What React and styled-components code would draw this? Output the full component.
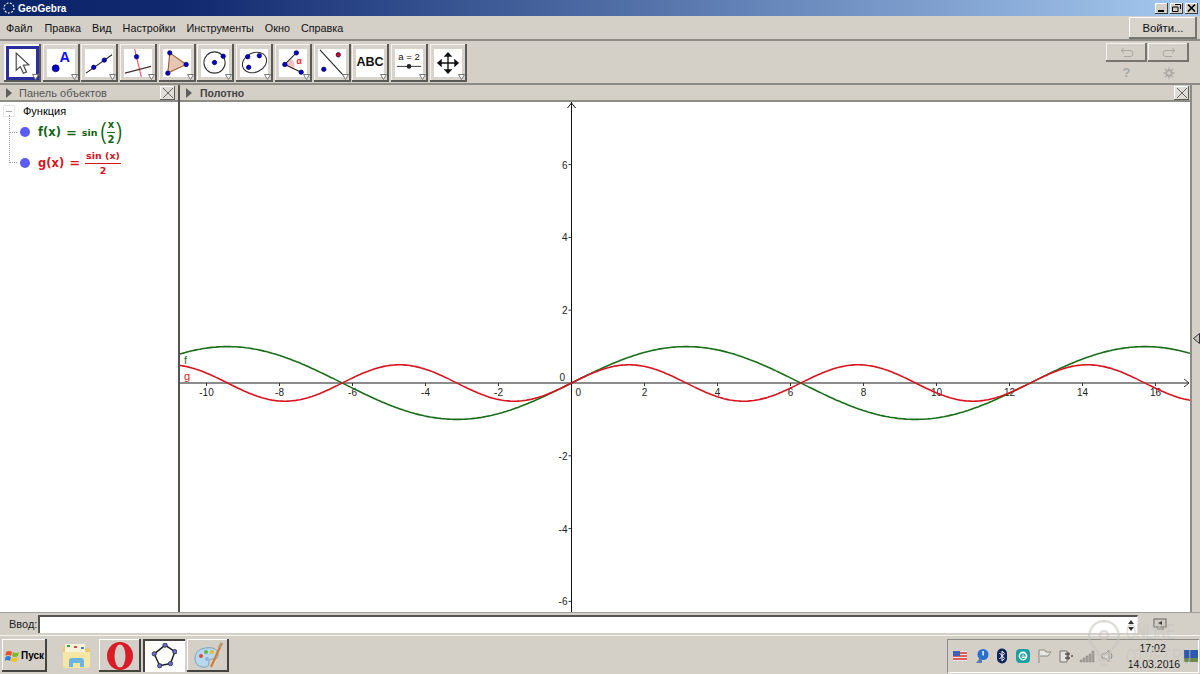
import styled, { createGlobalStyle } from "styled-components";

const GlobalStyle = createGlobalStyle`
  html, body { margin: 0; padding: 0; background: #d4d0c8; overflow: hidden; }
  body { font-family: "Liberation Sans", Arial, sans-serif; }
`;

const Screen = styled.div`
  width: 1200px;
  height: 674px;
  display: flex;
  flex-direction: column;
  position: relative;
  overflow: hidden;
  background: #d4d0c8;
`;

const TitleBar = styled.div`
  height: 16px;
  flex: none;
  display: flex;
  align-items: center;
  padding: 0 2px 0 3px;
  background: linear-gradient(90deg, #0a246a 0%, #10296f 15%, #a6caf0 100%);
  color: #fff;
  font-size: 10px;
  font-weight: bold;
`;

const TitleText = styled.span`
  margin-left: 3px;
  flex: 1;
`;

const WinButton = styled.div`
  width: 13px;
  height: 11px;
  margin-left: 2px;
  background: #d4d0c8;
  box-shadow: inset -1px -1px 0 #404040, inset 1px 1px 0 #fff;
  display: flex;
  align-items: center;
  justify-content: center;
`;

const MenuRow = styled.div`
  height: 25px;
  flex: none;
  display: flex;
  align-items: center;
  padding: 0 3px 0 6px;
  box-sizing: border-box;
  border-bottom: 2px solid #8e8c86;
  font-size: 10.8px;
  color: #111;
`;

const MenuItem = styled.span`
  margin-right: ${(p) => p.$gap}px;
`;

const LoginButton = styled.div`
  margin-left: auto;
  width: 68px;
  height: 22px;
  display: flex;
  align-items: center;
  justify-content: center;
  background: #d8d4cc;
  box-shadow: inset -2px -2px 0 #77756f, inset 1px 1px 0 #fff;
  font-size: 11.3px;
  color: #111;
`;

const ToolRow = styled.div`
  height: 44px;
  flex: none;
  display: flex;
  align-items: center;
  box-sizing: border-box;
  padding: 1px 10px 0 4px;
  border-bottom: 2px solid #8e8c86;
`;

const ToolButton = styled.div`
  width: 37px;
  height: 38px;
  margin-right: 1.7px;
  flex: none;
  position: relative;
  box-sizing: border-box;
  padding: ${(p) => (p.$active ? "2px" : "5px 5px 5px 4px")};
  background: ${(p) => (p.$active ? "#fff" : "#d8d4cc")};
  box-shadow: inset -2px -2px 0 #5a5956, inset 1px 1px 0 #f4f3ef;
`;

const ToolFace = styled.div`
  width: 100%;
  height: 100%;
  box-sizing: border-box;
  background: #fff;
  border: ${(p) => (p.$active ? "3px solid #2a2f9c" : "none")};
  svg { display: block; width: 100%; height: 100%; }
`;

const ToolMark = styled.svg`
  position: absolute;
  right: 2px;
  bottom: 2px;
  width: 7px;
  height: 6px;
`;

const HistoryArea = styled.div`
  margin-left: auto;
  align-self: stretch;
  width: 84px;
  display: grid;
  grid-template-columns: 41px 41px;
  grid-template-rows: 19px 1fr;
  gap: 0 1px;
  padding-top: 1px;
`;

const HistoryButton = styled.div`
  display: flex;
  align-items: center;
  justify-content: center;
  background: #d4d0c8;
  box-shadow: inset -2px -2px 0 #77756f, inset 1px 1px 0 #f4f3ef;
`;

const HistoryHint = styled.div`
  display: flex;
  align-items: center;
  justify-content: center;
  color: #aaa8a2;
  font-size: 13px;
  font-weight: bold;
`;

const Main = styled.div`
  flex: 1;
  min-height: 0;
  display: flex;
  position: relative;
`;

const ObjectPanel = styled.div`
  width: 178px;
  flex: none;
  display: flex;
  flex-direction: column;
`;

const Divider = styled.div`
  width: 2px;
  flex: none;
  background: #55534f;
`;

const GraphicsPanel = styled.div`
  width: 1010px;
  flex: none;
  display: flex;
  flex-direction: column;
`;

const SideStrip = styled.div`
  flex: 1;
  display: flex;
  align-items: center;
  justify-content: flex-end;
  border-left: 2px solid #8e8c86;
  padding-bottom: 20px;
`;

const PanelHeader = styled.div`
  height: 17px;
  flex: none;
  display: flex;
  align-items: center;
  box-sizing: border-box;
  padding: 0 ${(p) => (p.$bold ? 1 : 3)}px 0 6px;
  border-bottom: 2px solid #8e8c86;
  font-size: ${(p) => (p.$bold ? 10.5 : 11)}px;
  color: ${(p) => (p.$bold ? "#444" : "#555")};
  font-weight: ${(p) => (p.$bold ? "bold" : "normal")};
`;

const HeaderArrow = styled.div`
  width: 0;
  height: 0;
  border-left: 6px solid #5e5e5e;
  border-top: 5px solid transparent;
  border-bottom: 5px solid transparent;
  margin-right: ${(p) => p.$gap}px;
`;

const CloseBox = styled.div`
  margin-left: auto;
  width: 15px;
  height: 14px;
  box-sizing: border-box;
  background: #e0ddd6;
  box-shadow: inset -1px -1px 0 #5e5c58, inset 1px 1px 0 #fff;
  display: flex;
  align-items: center;
  justify-content: center;
`;

const TreeArea = styled.div`
  flex: 1;
  background: #fff;
  position: relative;
  padding: 2px 0 0 3px;
  font-size: 11px;
  color: #000;
`;

const TreeTitle = styled.div`
  display: flex;
  align-items: center;
  height: 14px;
`;

const CollapseBox = styled.div`
  width: 12px;
  height: 12px;
  box-sizing: border-box;
  border: 1px solid #e4e4e4;
  display: flex;
  align-items: center;
  justify-content: center;
  margin-right: 8px;
  &::before {
    content: "";
    width: 6px;
    height: 1px;
    background: #aaa;
  }
`;

const TreeRow = styled.div`
  display: flex;
  align-items: center;
  height: ${(p) => p.$h}px;
  margin-left: 6px;
  padding-left: 4px;
  position: relative;
  color: ${(p) => p.$color};
  font: bold 11.5px "DejaVu Sans", sans-serif;
  &::before {
    content: "";
    position: absolute;
    left: 0;
    top: ${(p) => p.$lineTop}px;
    height: ${(p) => p.$lineH}px;
    width: 7px;
    border-left: 1px dotted #999;
    border-bottom: 1px dotted #999;
  }
`;

const Dot = styled.span`
  width: 10px;
  height: 10px;
  border-radius: 50%;
  background: #5a5cf5;
  margin: 0 8px 0 7px;
  flex: none;
`;

const Equals = styled.span`
  margin: 0 5px;
  font-size: 13px;
`;

const MathFn = styled.span`
  font-size: 9.5px;
`;

const Paren = styled.span`
  font: normal 25px/1 "Liberation Sans", sans-serif;
  margin: -3px 0 0 ${(p) => p.$ml || 0}px;
  transform: scale(0.72, 0.95);
`;

const Fraction = styled.span`
  display: inline-flex;
  flex-direction: column;
  align-items: center;
  font-size: ${(p) => p.$size}px;
  line-height: 13px;
`;

const FractionTop = styled.span`
  border-bottom: 1px solid currentColor;
  padding: 0 1px 1px;
  align-self: stretch;
  text-align: center;
  white-space: nowrap;
`;

const Canvas = styled.div`
  flex: 1;
  min-height: 0;
  background: #fff;
  svg { display: block; }
`;

const InputRow = styled.div`
  height: 24px;
  flex: none;
  display: flex;
  align-items: center;
  box-sizing: border-box;
  padding: 0 0 0 9px;
  border-top: 1px solid #a09e98;
  border-bottom: 1px solid #f4f3ef;
  font-size: 11px;
  color: #222;
`;

const InputLabel = styled.span`
  width: 29px;
  flex: none;
`;

const InputBox = styled.div`
  width: 1100px;
  height: 18px;
  box-sizing: border-box;
  background: #fff;
  border-top: 2px solid #55534f;
  border-left: 2px solid #55534f;
  border-right: 1px solid #eee;
  display: flex;
  align-items: center;
  justify-content: flex-end;
  padding-right: 2px;
`;

const KeyboardIcon = styled.div`
  margin-left: 15px;
  display: flex;
`;

const Taskbar = styled.div`
  height: 38px;
  flex: none;
  box-sizing: border-box;
  display: flex;
  align-items: center;
  padding: 1px 1px 0 2px;
`;

const StartButton = styled.div`
  width: 45px;
  height: 33px;
  flex: none;
  box-sizing: border-box;
  display: flex;
  align-items: center;
  padding-left: 3px;
  gap: 1px;
  background: #d4d0c8;
  box-shadow: inset -2px -2px 0 #45443f, inset 1px 1px 0 #fff;
  font-size: 10px;
  font-weight: bold;
  color: #000;
`;

const AppButton = styled.div`
  width: 42px;
  height: 33px;
  flex: none;
  margin-left: ${(p) => p.$ml || 2}px;
  display: flex;
  align-items: center;
  justify-content: center;
  background: ${(p) => (p.$pressed ? "#fdfdfc" : "#d4d0c8")};
  box-shadow: ${(p) =>
    p.$pressed
      ? "inset 2px 2px 0 #45443f, inset -1px -1px 0 #fff"
      : p.$flat
        ? "none"
        : "inset -2px -2px 0 #45443f, inset 1px 1px 0 #fff"};
`;

const Tray = styled.div`
  margin-left: auto;
  width: 252px;
  height: 34px;
  box-sizing: border-box;
  display: flex;
  align-items: center;
  padding-left: 5px;
  box-shadow: inset 1px 1px 0 #8e8c86, inset -1px -1px 0 #fff;
`;

const TrayIcons = styled.div`
  display: flex;
  align-items: center;
  gap: 5.1px;
`;

const Clock = styled.div`
  margin-left: 12px;
  width: 50px;
  flex: none;
  text-align: center;
  font-size: 10.5px;
  line-height: 16px;
  color: #111;
`;

const ShowDesktop = styled.svg`
  margin-left: 6px;
  flex: none;
`;

const Watermark = styled.div`
  position: absolute;
  left: 1087px;
  top: 619px;
  display: flex;
  gap: 5px;
  opacity: 0.6;
  pointer-events: none;
  color: #c9c6bf;
  svg { flex: none; }
`;

const WatermarkText = styled.div`
  width: 64px;
  flex: none;
  font: 22px/25px "Liberation Sans", sans-serif;
  transform: scaleX(0.6);
  transform-origin: left top;
  white-space: nowrap;
`;

const NAVY = "#0000d0";

const P = ({ x, y, r = 2.3, c = NAVY }) => (
  <circle cx={x} cy={y} r={r} fill={c} stroke="#00004a" strokeWidth="0.7" />
);

const toolIcons = [
  <svg viewBox="0 0 30 30" key="move">
    <path d="M8 4 L8 23 L12.5 19 L16 26.5 L19.5 25 L16 17.5 L22 17 Z" fill="#fff" stroke="#444" strokeWidth="1.3" />
  </svg>,
  <svg viewBox="0 0 29 29" key="point">
    <P x={9} y={20} r={3.6} />
    <text x={13} y={13} fontSize="15" fontWeight="bold" fill="#1010f0" fontFamily="Liberation Sans">A</text>
  </svg>,
  <svg viewBox="0 0 29 29" key="line">
    <line x1="1" y1="25" x2="28" y2="6" stroke="#222" strokeWidth="1.1" />
    <P x={9} y={19} />
    <P x={20} y={11.5} />
  </svg>,
  <svg viewBox="0 0 29 29" key="perp">
    <line x1="11" y1="0" x2="18" y2="29" stroke="#f04060" strokeWidth="1.1" />
    <line x1="1" y1="25" x2="28" y2="18" stroke="#4a3030" strokeWidth="1.1" />
    <P x={13} y={8} />
  </svg>,
  <svg viewBox="0 0 29 29" key="poly">
    <path d="M7 4 L24 16 L5 25 Z" fill="#e6c6b4" stroke="#a06038" strokeWidth="1.2" />
    <P x={7} y={4} />
    <P x={24} y={16} />
    <P x={5} y={25} />
  </svg>,
  <svg viewBox="0 0 29 29" key="circle">
    <circle cx="14" cy="14" r="11" fill="none" stroke="#333" strokeWidth="1.1" />
    <P x={14} y={14} />
    <P x={23} y={7.5} />
  </svg>,
  <svg viewBox="0 0 29 29" key="conic">
    <ellipse cx="15" cy="14" rx="13" ry="10" transform="rotate(-25 15 14)" fill="none" stroke="#333" strokeWidth="1.1" />
    <P x={8} y={8} />
    <P x={20} y={7} />
    <P x={9} y={19} />
  </svg>,
  <svg viewBox="0 0 29 29" key="angle">
    <path d="M6 16 L15 21 A9 9 0 0 0 13 10 Z" fill="#f4c0c0" />
    <path d="M6 16 L18 4 M6 16 L23 24" fill="none" stroke="#222" strokeWidth="1.1" />
    <P x={6} y={16} />
    <P x={18} y={4} />
    <P x={23} y={24} />
    <text x={18} y={16} fontSize="9" fontWeight="bold" fill="#f02020" fontFamily="Liberation Sans">α</text>
  </svg>,
  <svg viewBox="0 0 29 29" key="reflect">
    <line x1="2" y1="1" x2="27" y2="28" stroke="#222" strokeWidth="1.1" />
    <P x={21} y={6} c="#d00020" />
    <P x={6} y={21} />
  </svg>,
  <svg viewBox="0 0 29 29" key="text">
    <text x={14.5} y={18} textAnchor="middle" fontSize="13" fontWeight="bold" fill="#111" fontFamily="Liberation Sans">ABC</text>
  </svg>,
  <svg viewBox="0 0 29 29" key="slider">
    <text x={14.5} y={11} textAnchor="middle" fontSize="10" fill="#111" fontFamily="Liberation Sans">a = 2</text>
    <line x1="2" y1="18" x2="27" y2="18" stroke="#333" strokeWidth="1" />
    <circle cx="14.5" cy="18" r="2.4" fill="#222" />
  </svg>,
  <svg viewBox="0 0 29 29" key="pan">
    <path d="M14.5 5 V24 M5 14.5 H24" stroke="#111" strokeWidth="1.4" />
    <path d="M14.5 3 L19 8 H10 Z M14.5 26 L19 21 H10 Z M3 14.5 L8 10 V19 Z M26 14.5 L21 10 V19 Z" fill="#111" />
  </svg>,
];

const menus = [
  ["Файл", 12],
  ["Правка", 11],
  ["Вид", 11],
  ["Настройки", 11],
  ["Инструменты", 11],
  ["Окно", 11],
  ["Справка", 0],
];

function X({ color = "#666" }) {
  return (
    <svg width="12" height="12" viewBox="0 0 12 12">
      <path d="M1 1 L11 11 M11 1 L1 11" stroke={color} strokeWidth="1" />
    </svg>
  );
}

// graph settings taken from the picture
const W = 1010;
const H = 510;
const UNIT_X = 36.5;
const UNIT_Y = 36.4;
const OX = 391.5;
const OY = 281;

function curve(fn) {
  const pts = [];
  for (let px = 0; px <= W; px += 2) {
    const v = (px - OX) / UNIT_X;
    pts.push(`${px},${(OY - fn(v) * UNIT_Y).toFixed(1)}`);
  }
  return pts.join(" ");
}

function Graph() {
  const xs = [-10, -8, -6, -4, -2, 2, 4, 6, 8, 10, 12, 14, 16];
  const ys = [-6, -4, -2, 2, 4, 6];
  return (
    <svg width={W} height={H} viewBox={`0 0 ${W} ${H}`} fontFamily="Liberation Sans" fontSize="10" fill="#222">
      <line x1="0" y1={OY} x2={W - 1} y2={OY} stroke="#666" strokeWidth="1.6" />
      <path d={`M${W - 6} ${OY - 4} L${W - 1} ${OY} L${W - 6} ${OY + 4}`} fill="none" stroke="#333" />
      <line x1={OX} y1="0" x2={OX} y2={H} stroke="#111" />
      <path d={`M${OX - 4} 6 L${OX} 1 L${OX + 4} 6`} fill="none" stroke="#111" />
      {xs.map((v) => (
        <g key={v}>
          <line x1={OX + v * UNIT_X} y1={OY} x2={OX + v * UNIT_X} y2={OY + 3} stroke="#333" />
          <text x={OX + v * UNIT_X} y={OY + 13} textAnchor="middle">{v < 0 ? `-${-v}` : v}</text>
        </g>
      ))}
      {ys.map((v) => (
        <g key={v}>
          <line x1={OX - 3} y1={OY - v * UNIT_Y} x2={OX} y2={OY - v * UNIT_Y} stroke="#333" />
          <text x={OX - 4} y={OY - v * UNIT_Y + 4} textAnchor="end">{v < 0 ? `-${-v}` : v}</text>
        </g>
      ))}
      <text x={OX - 12} y={OY - 2}>0</text>
      <text x={OX + 4} y={OY + 13}>0</text>
      <polyline points={curve((v) => Math.sin(v / 2))} fill="none" stroke="#1a6e1a" strokeWidth="1.6" />
      <polyline points={curve((v) => Math.sin(v) / 2)} fill="none" stroke="#d8141e" strokeWidth="1.6" />
      <text x="4" y="262" fontSize="11" fill="#1a6e1a">f</text>
      <text x="4" y="278" fontSize="11" fill="#d8141e">g</text>
    </svg>
  );
}

function GeoGebraMark() {
  const pts = [[6.5, 1], [11, 4], [9, 9.5], [4, 10.5], [1.5, 5]];
  return (
    <svg width="26" height="26" viewBox="0 0 12 12">
      <polygon points={pts.map((p) => p.join(",")).join(" ")} fill="none" stroke="#222" strokeWidth="0.7" />
      {pts.map((p) => <circle key={p[0]} cx={p[0]} cy={p[1]} r="1" fill="#6a6cd8" stroke="#222" strokeWidth="0.35" />)}
    </svg>
  );
}

function TrayIconSet() {
  return (
    <TrayIcons>
      <svg width="16" height="16" viewBox="0 0 16 16">
        <rect x="1" y="3" width="14" height="10" fill="#e8e8f0" />
        <path d="M1 5h14M1 8h14M1 11h14" stroke="#d83030" strokeWidth="1.3" />
        <rect x="1" y="3" width="7" height="5" fill="#4060b8" />
      </svg>
      <svg width="16" height="16" viewBox="0 0 16 16">
        <circle cx="10" cy="6.5" r="5.5" fill="#2a6fd0" />
        <path d="M3 15 L7 10 L9 12 L9 15 Z" fill="#5a7ab0" />
        <rect x="9.4" y="3" width="1.4" height="4.5" fill="#fff" />
      </svg>
      <svg width="16" height="16" viewBox="0 0 16 16">
        <rect x="3" y="0.5" width="10" height="15" rx="5" fill="#10265c" />
        <path d="M5.5 5 L10.5 10.5 L8 13 V3 L10.5 5.5 L5.5 11" fill="none" stroke="#fff" strokeWidth="1" />
      </svg>
      <svg width="16" height="16" viewBox="0 0 16 16">
        <rect x="1" y="1" width="14" height="14" rx="4" fill="#1aa0a0" />
        <circle cx="8" cy="8" r="4.4" fill="#fff" />
        <path d="M5.6 8 H10.2 A2.3 2.3 0 1 0 9.6 9.8" fill="none" stroke="#1aa0a0" strokeWidth="1.2" />
      </svg>
      <svg width="16" height="16" viewBox="0 0 16 16">
        <path d="M3 15 V2 H9 L10 4 H15 L12 8 H4" fill="#e8e6e0" stroke="#8a8880" />
      </svg>
      <svg width="16" height="16" viewBox="0 0 16 16">
        <path d="M3 3 H10 V14 H3 Z" fill="#e4e2dc" stroke="#77756f" />
        <path d="M8 6 H13 M8 10 H13 M11 4 V12 M14 8 H16" stroke="#55534f" strokeWidth="1.3" />
      </svg>
      <svg width="16" height="16" viewBox="0 0 16 16">
        <path d="M1 12h2v2H1zM4 10h2v4H4zM7 8h2v6H7zM10 6h2v8h-2zM13 3h2v11h-2z" fill="#a8a69e" stroke="#77756f" strokeWidth="0.4" />
      </svg>
      <svg width="16" height="16" viewBox="0 0 16 16">
        <path d="M2 6 H5 L9 2.5 V13.5 L5 10 H2 Z" fill="#dedcd6" stroke="#8e8c86" />
        <path d="M11 5 Q13 8 11 11" fill="none" stroke="#8e8c86" />
      </svg>
    </TrayIcons>
  );
}

export default function App() {
  return (
    <Screen>
      <GlobalStyle />
      <TitleBar>
        <svg width="12" height="12" viewBox="0 0 12 12">
          <circle cx="6" cy="6" r="5" fill="none" stroke="#fff" strokeWidth="1.1" strokeDasharray="2 1.4" />
        </svg>
        <TitleText>GeoGebra</TitleText>
        <WinButton>
          <svg width="9" height="8" viewBox="0 0 9 8"><rect x="1" y="6" width="6" height="2" fill="#000" /></svg>
        </WinButton>
        <WinButton>
          <svg width="9" height="8" viewBox="0 0 9 8"><path d="M3 0.5h5.5v4.5M0.5 3h5.5v4.5h-5.5z" fill="none" stroke="#000" /></svg>
        </WinButton>
        <WinButton>
          <svg width="9" height="8" viewBox="0 0 9 8"><path d="M1 0.5 L8 7.5 M8 0.5 L1 7.5" stroke="#000" strokeWidth="1.6" /></svg>
        </WinButton>
      </TitleBar>

      <MenuRow>
        {menus.map(([name, gap]) => (
          <MenuItem key={name} $gap={gap}>{name}</MenuItem>
        ))}
        <LoginButton>Войти...</LoginButton>
      </MenuRow>

      <ToolRow>
        {toolIcons.map((icon, i) => (
          <ToolButton key={i} $active={i === 0}>
            <ToolFace $active={i === 0}>{icon}</ToolFace>
            <ToolMark viewBox="0 0 7 6">
              <path d="M0.5 0.5 H6.5 L3.5 5.5 Z" fill="#fff" stroke="#777" />
            </ToolMark>
          </ToolButton>
        ))}
        <HistoryArea>
          <HistoryButton>
            <svg width="14" height="11" viewBox="0 0 14 11">
              <path d="M4 1 L1 3.5 L4 6 M1 3.5 H10 A3 3 0 0 1 10 9.5 H4" fill="none" stroke="#a8a69e" />
            </svg>
          </HistoryButton>
          <HistoryButton>
            <svg width="14" height="11" viewBox="0 0 14 11">
              <path d="M10 1 L13 3.5 L10 6 M13 3.5 H4 A3 3 0 0 0 4 9.5 H10" fill="none" stroke="#a8a69e" />
            </svg>
          </HistoryButton>
          <HistoryHint>?</HistoryHint>
          <HistoryHint>
            <svg width="12" height="12" viewBox="0 0 12 12">
              <circle cx="6" cy="6" r="2.6" fill="none" stroke="#aaa8a2" strokeWidth="1.6" />
              <path d="M6 0.5V3M6 9V11.5M0.5 6H3M9 6H11.5M2 2L3.8 3.8M8.2 8.2L10 10M10 2L8.2 3.8M3.8 8.2L2 10" stroke="#aaa8a2" strokeWidth="1.3" />
            </svg>
          </HistoryHint>
        </HistoryArea>
      </ToolRow>

      <Main>
        <ObjectPanel>
          <PanelHeader>
            <HeaderArrow $gap={7} />
            Панель объектов
            <CloseBox><X /></CloseBox>
          </PanelHeader>
          <TreeArea>
            <TreeTitle>
              <CollapseBox />
              Функция
            </TreeTitle>
            <TreeRow $color="#146414" $h={28} $lineTop={-3} $lineH={17}>
              <Dot />
              f(x)
              <Equals>=</Equals>
              <MathFn>sin</MathFn>
              <Paren $ml={1}>(</Paren>
              <Fraction $size={10}>
                <FractionTop>x</FractionTop>
                <span>2</span>
              </Fraction>
              <Paren>)</Paren>
            </TreeRow>
            <TreeRow $color="#d8141e" $h={33} $lineTop={-14} $lineH={30}>
              <Dot />
              g(x)
              <Equals>=</Equals>
              <Fraction $size={9.5}>
                <FractionTop>sin (x)</FractionTop>
                <span>2</span>
              </Fraction>
            </TreeRow>
          </TreeArea>
        </ObjectPanel>
        <Divider />
        <GraphicsPanel>
          <PanelHeader $bold>
            <HeaderArrow $gap={8} />
            Полотно
            <CloseBox><X /></CloseBox>
          </PanelHeader>
          <Canvas>
            <Graph />
          </Canvas>
        </GraphicsPanel>
        <SideStrip>
          <svg width="7" height="11" viewBox="0 0 7 11">
            <path d="M6.5 0.5 V10.5 L0.5 5.5 Z" fill="#c4c1ba" stroke="#333" />
          </svg>
        </SideStrip>
      </Main>

      <InputRow>
        <InputLabel>Ввод:</InputLabel>
        <InputBox>
          <svg width="8" height="13" viewBox="0 0 8 13">
            <path d="M4 1 L7 5 H1 Z M4 12 L7 8 H1 Z" fill="#333" />
          </svg>
        </InputBox>
        <KeyboardIcon>
          <svg width="14" height="14" viewBox="0 0 14 14">
            <rect x="1" y="2" width="12" height="8" fill="#cfccc4" stroke="#66645e" />
            <path d="M9 4 L5 6 L9 8 Z" fill="#45433f" />
            <path d="M4 12 H11" stroke="#77756f" />
          </svg>
        </KeyboardIcon>
      </InputRow>

      <Taskbar>
        <StartButton>
          <svg width="15" height="14" viewBox="0 0 15 14">
            <path d="M1 3 Q4 1 7 3 L6 7 Q3 5 0.5 7 Z" fill="#e8502a" />
            <path d="M8 3 Q11 5 14 3 L13 7 Q10 9 7 7 Z" fill="#7ab82c" />
            <path d="M0.5 8 Q3 6 6 8 L5 12 Q2 10 0 12 Z" fill="#2a7ad8" />
            <path d="M7 8 Q10 10 13 8 L12 12 Q9 14 6 12 Z" fill="#f4c020" />
          </svg>
          Пуск
        </StartButton>
        <AppButton $flat $ml={8}>
          <svg width="32" height="28" viewBox="0 0 30 28">
            <path d="M2 6 Q2 4 4 4 H11 L13 6 H27 Q29 6 29 8 V24 Q29 26 27 26 H4 Q2 26 2 24 Z" fill="#e8c870" />
            <rect x="4" y="2" width="20" height="8" fill="#f6f2dc" />
            <rect x="6" y="3" width="3" height="2" fill="#3aa83a" />
            <rect x="13" y="4" width="3" height="2" fill="#d84a3a" />
            <rect x="20" y="5" width="3" height="2" fill="#3a8ad8" />
            <path d="M2 10 H29 V24 Q29 26 27 26 H4 Q2 26 2 24 Z" fill="#f6e6a4" />
            <path d="M8 25 V19 Q8 16 11 16 H20 Q23 16 23 19 V25 H19 V21 H12 V25 Z" fill="#6ab4e4" />
          </svg>
        </AppButton>
        <AppButton>
          <svg width="28" height="30" viewBox="0 0 28 30">
            <ellipse cx="14" cy="15" rx="13" ry="14" fill="#d81c28" />
            <ellipse cx="14" cy="15" rx="5.5" ry="11.5" fill="#d4d0c8" />
          </svg>
        </AppButton>
        <AppButton $pressed>
          <GeoGebraMark />
        </AppButton>
        <AppButton>
          <svg width="30" height="28" viewBox="0 0 30 28">
            <path d="M2 18 Q1 8 12 6 Q24 4 25 12 Q26 18 19 17 Q15 17 16 21 Q16 26 9 25 Q3 24 2 18 Z" fill="#b8d8ee" stroke="#6a94b8" strokeWidth="0.8" />
            <circle cx="8" cy="14" r="2" fill="#d84a3a" />
            <circle cx="13" cy="10" r="2" fill="#6ab04a" />
            <circle cx="19" cy="10" r="2" fill="#f0b428" />
            <circle cx="14" cy="17" r="2" fill="#8ab4d8" />
            <path d="M18 25 L27 5" stroke="#d87820" strokeWidth="2" />
            <path d="M26 6 L29 1" stroke="#b89868" strokeWidth="3" />
          </svg>
        </AppButton>
        <Tray>
          <TrayIconSet />
          <Clock>
            17:02
            <br />
            14.03.2016
          </Clock>
          <ShowDesktop width="14" height="12" viewBox="0 0 14 12">
            <rect width="14" height="10" fill="#2a5ab0" />
            <rect y="8" width="14" height="4" fill="#6a8a50" />
          </ShowDesktop>
        </Tray>
      </Taskbar>

      <Watermark>
        <svg width="34" height="48" viewBox="0 0 34 48" fill="none" stroke="currentColor" strokeWidth="2.4">
          <path d="M17 2 A15 15 0 0 1 27 28 Q23 31 23 36 H11 Q11 31 7 28 A15 15 0 0 1 17 2 Z" />
          <path d="M11 41 H23 M13 46 H21" />
          <circle cx="17" cy="16" r="4" />
        </svg>
        <WatermarkText>
          ONLINE
          <br />
          OTVET.RU
        </WatermarkText>
      </Watermark>
    </Screen>
  );
}
